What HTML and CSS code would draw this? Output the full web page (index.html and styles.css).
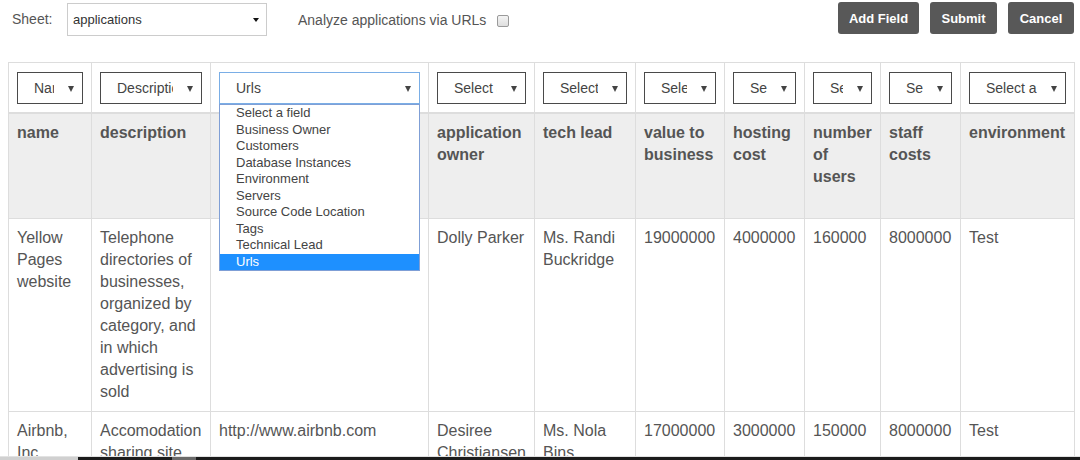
FILE: index.html
```html
<!DOCTYPE html>
<html>
<head>
<meta charset="utf-8">
<link rel="stylesheet" href="styles.css">
</head>
<body>
<div class="page">
  <div class="topbar">
    <span class="lbl">Sheet:</span>
    <div class="sheet-select"><span>applications</span><i class="caret-sm"></i></div>
    <span class="analyze">Analyze applications via URLs</span>
    <span class="chk"></span>
    <div class="spacer"></div>
    <button class="btn btn-add">Add Field</button>
    <button class="btn btn-submit">Submit</button>
    <button class="btn btn-cancel">Cancel</button>
  </div>

  <table class="grid">
    <colgroup>
      <col class="c1"><col class="c2"><col class="c3"><col class="c4"><col class="c5">
      <col class="c6"><col class="c7"><col class="c8"><col class="c9"><col class="c10">
    </colgroup>
    <tr class="filters">
      <td><div class="fsel"><span class="ftxt">Name</span><i class="caret"></i></div></td>
      <td><div class="fsel"><span class="ftxt">Description</span><i class="caret"></i></div></td>
      <td class="dd-cell">
        <div class="fsel focus"><span class="ftxt">Urls</span><i class="caret"></i></div>
        <ul class="dropdown">
          <li>Select a field</li>
          <li>Business Owner</li>
          <li>Customers</li>
          <li>Database Instances</li>
          <li>Environment</li>
          <li>Servers</li>
          <li>Source Code Location</li>
          <li>Tags</li>
          <li>Technical Lead</li>
          <li class="sel">Urls</li>
        </ul>
      </td>
      <td><div class="fsel"><span class="ftxt">Select a field</span><i class="caret"></i></div></td>
      <td><div class="fsel"><span class="ftxt">Select a field</span><i class="caret"></i></div></td>
      <td><div class="fsel"><span class="ftxt">Select a field</span><i class="caret"></i></div></td>
      <td><div class="fsel"><span class="ftxt">Select a field</span><i class="caret"></i></div></td>
      <td><div class="fsel"><span class="ftxt">Select a field</span><i class="caret"></i></div></td>
      <td><div class="fsel"><span class="ftxt">Select a field</span><i class="caret"></i></div></td>
      <td><div class="fsel"><span class="ftxt">Select a field</span><i class="caret"></i></div></td>
    </tr>
    <tr class="head">
      <th><div class="hd">name</div></th>
      <th><div class="hd">description</div></th>
      <th><div class="hd"></div></th>
      <th><div class="hd">application owner</div></th>
      <th><div class="hd">tech lead</div></th>
      <th><div class="hd">value to business</div></th>
      <th><div class="hd">hosting cost</div></th>
      <th><div class="hd">number of users</div></th>
      <th><div class="hd">staff costs</div></th>
      <th><div class="hd">environment</div></th>
    </tr>
    <tr>
      <td>Yellow Pages website</td>
      <td>Telephone directories of businesses, organized by category, and in which advertising is sold</td>
      <td></td>
      <td>Dolly Parker</td>
      <td>Ms. Randi Buckridge</td>
      <td>19000000</td>
      <td>4000000</td>
      <td>160000</td>
      <td>8000000</td>
      <td>Test</td>
    </tr>
    <tr>
      <td>Airbnb, Inc.</td>
      <td>Accomodation sharing site</td>
      <td>http://www.airbnb.com</td>
      <td>Desiree Christiansen</td>
      <td>Ms. Nola Bins</td>
      <td>17000000</td>
      <td>3000000</td>
      <td>150000</td>
      <td>8000000</td>
      <td>Test</td>
    </tr>
  </table>
</div>
<div class="bottom-strip"></div>
</body>
</html>
```

FILE: styles.css
```css
html, body {
  margin: 0;
  padding: 0;
  overflow: hidden;
  background: #fff;
}
body {
  font-family: "Liberation Sans", Arial, sans-serif;
  color: #555;
}
.page {
  width: 1080px;
  height: 460px;
  overflow: hidden;
}
.topbar {
  display: flex;
  align-items: flex-start;
  padding: 2px 6px 0 12px;
  height: 62px;
  box-sizing: border-box;
  font-size: 14px;
}
.lbl {
  margin-top: 9px;
  width: 55px;
}
.sheet-select {
  margin-top: 1px;
  width: 200px;
  height: 33px;
  box-sizing: border-box;
  border: 1px solid #ccc;
  display: flex;
  align-items: center;
  padding: 0 7px 0 5px;
  font-size: 13px;
  color: #333;
}
.sheet-select span { flex: 1; }
.caret-sm {
  width: 0; height: 0;
  border-left: 3px solid transparent;
  border-right: 3px solid transparent;
  border-top: 4px solid #111;
}
.analyze {
  margin-left: 31px;
  margin-top: 10px;
}
.chk {
  margin-left: 11px;
  margin-top: 13px;
  width: 12px;
  height: 12px;
  box-sizing: border-box;
  border: 1px solid #9a9a9a;
  border-radius: 2px;
  background: linear-gradient(#f4f4f4, #dedede);
}
.spacer { flex: 1; }
.btn {
  height: 32px;
  border: none;
  border-radius: 3px;
  background: #585858;
  color: #fff;
  font-family: "Liberation Sans", Arial, sans-serif;
  font-size: 13px;
  font-weight: bold;
  padding: 0;
  margin-left: 11px;
}
.btn-add { width: 81px; }
.btn-submit { width: 67px; }
.btn-cancel { width: 66px; }

.grid {
  margin-left: 8px;
  border-collapse: collapse;
  table-layout: fixed;
  width: 1066px;
  font-size: 16px;
  line-height: 22px;
}
.c1 { width: 83px; }
.c2 { width: 119px; }
.c3 { width: 218px; }
.c4 { width: 106px; }
.c5 { width: 101px; }
.c6 { width: 89px; }
.c7 { width: 80px; }
.c8 { width: 76px; }
.c9 { width: 80px; }
.c10 { width: 114px; }

.grid td, .grid th {
  border: 1px solid #ddd;
  padding: 8px;
  vertical-align: top;
  text-align: left;
}
.filters td {
  padding: 9px 8px 8px;
  border-bottom: 2px solid #ddd;
}
.head th {
  background: #eee;
  font-weight: bold;
}
.hd { min-height: 88px; }

.fsel {
  height: 32px;
  box-sizing: border-box;
  border: 1px solid #4a4a4a;
  background: #fff;
  position: relative;
  font-size: 14px;
  line-height: 30px;
  color: #444;
  padding: 0 28px 0 16px;
  white-space: nowrap;
  overflow: hidden;
}
.fsel .ftxt {
  display: block;
  overflow: hidden;
}
.fsel.focus {
  border-color: #7aaee6;
}
.caret {
  position: absolute;
  right: 8px;
  top: 13px;
  width: 0; height: 0;
  border-left: 3px solid transparent;
  border-right: 3px solid transparent;
  border-top: 6px solid #444;
}
.dd-cell { position: relative; }
.dropdown {
  position: absolute;
  left: 8px;
  top: 41px;
  width: 201px;
  box-sizing: border-box;
  margin: 0;
  padding: 0;
  list-style: none;
  background: #fff;
  border: 1px solid #7f9fd6;
  font-size: 13px;
  line-height: 16.5px;
  color: #444;
  z-index: 5;
}
.dropdown li {
  padding-left: 16px;
}
.dropdown li.sel {
  background: #1e90ff;
  color: #fff;
}
.bottom-strip {
  position: fixed;
  left: 0;
  right: 0;
  bottom: 0;
  height: 3px;
  background: linear-gradient(to right, #d0d0d0 0, #d0d0d0 78px, #1c1c1c 78px, #1c1c1c 172px, #6a6a6a 172px, #6a6a6a 196px, #1c1c1c 196px);
  border-top: 1px solid #e2e2e2;
}
```
